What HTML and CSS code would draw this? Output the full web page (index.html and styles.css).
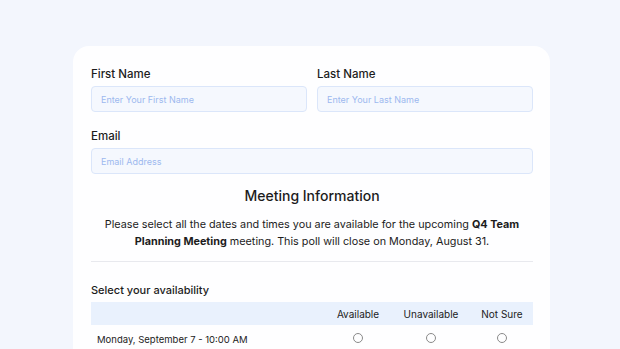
FILE: index.html
```html
<!DOCTYPE html>
<html>
<head>
<meta charset="utf-8">
<link rel="stylesheet" href="styles.css">
</head>
<body>
<div class="card">
  <div class="row">
    <div class="field">
      <label class="label">First Name</label>
      <div class="input">Enter Your First Name</div>
    </div>
    <div class="field">
      <label class="label">Last Name</label>
      <div class="input">Enter Your Last Name</div>
    </div>
  </div>
  <div class="field email">
    <label class="label">Email</label>
    <div class="input">Email Address</div>
  </div>
  <h2 class="title">Meeting Information</h2>
  <p class="desc">Please select all the dates and times you are available for the upcoming <b>Q4 Team Planning Meeting</b> meeting. This poll will close on Monday, August 31.</p>
  <hr class="divider">
  <div class="section">Select your availability</div>
  <div class="table">
    <div class="thead">
      <div class="c0"></div>
      <div class="c1">Available</div>
      <div class="c2">Unavailable</div>
      <div class="c3">Not Sure</div>
    </div>
    <div class="trow">
      <div class="c0">Monday, September 7 - 10:00 AM</div>
      <div class="c1"><span class="radio"></span></div>
      <div class="c2"><span class="radio"></span></div>
      <div class="c3"><span class="radio"></span></div>
    </div>
  </div>
</div>
</body>
</html>
```
FILE: styles.css
```css
* { box-sizing: border-box; }
html, body { margin: 0; padding: 0; }
body {
  background: #f3f6fd;
  font-family: Inter, "Noto Sans", sans-serif;
  color: #1c1c1c;
  width: 620px;
  height: 349px;
  overflow: hidden;
}
.card {
  margin: 46px 0 0 73px;
  width: 477px;
  height: 320px;
  background: #fefeff;
  border-radius: 16px;
  padding: 20px 17px 0 18px;
}
.row {
  display: grid;
  grid-template-columns: 1fr 1fr;
  gap: 10px;
}
.field { display: flex; flex-direction: column; }
.label {
  font-size: 11.5px;
  font-weight: 500;
  line-height: 16px;
  margin-bottom: 4px;
}
.input {
  height: 26px;
  background: #f5f8fe;
  border: 1px solid #dbe6fa;
  border-radius: 4px;
  font-size: 9px;
  color: #9db9ef;
  padding-left: 9px;
  display: flex;
  align-items: center;
}
.email { margin-top: 16px; }
.title {
  margin: 12px 0 0;
  font-size: 14px;
  font-weight: 500;
  line-height: 20px;
  text-align: center;
}
.desc {
  margin: 10px 0 0;
  font-size: 10.8px;
  line-height: 17px;
  text-align: center;
  padding: 0 8px;
}
.desc b { font-weight: 700; }
.divider {
  margin: 11px 0 0;
  border: 0;
  border-top: 1px solid #e8e9ee;
}
.section {
  margin-top: 20px;
  font-size: 11px;
  font-weight: 500;
  line-height: 16px;
}
.table { margin-top: 4px; }
.thead, .trow {
  display: flex;
  align-items: center;
}
.thead {
  height: 23px;
  background: #e9f1fd;
  font-size: 10px;
}
.trow {
  height: 28px;
  font-size: 9.5px;
}
.c0 { flex: 1; padding-left: 6px; }
.c1 { width: 66px; text-align: center; }
.c2 { width: 80px; text-align: center; }
.c3 { width: 62px; text-align: center; }
.radio {
  display: inline-block;
  width: 10px;
  height: 10px;
  border: 1px solid #8a8a8a;
  border-radius: 50%;
  vertical-align: middle;
  margin-top: -3px;
}
```
